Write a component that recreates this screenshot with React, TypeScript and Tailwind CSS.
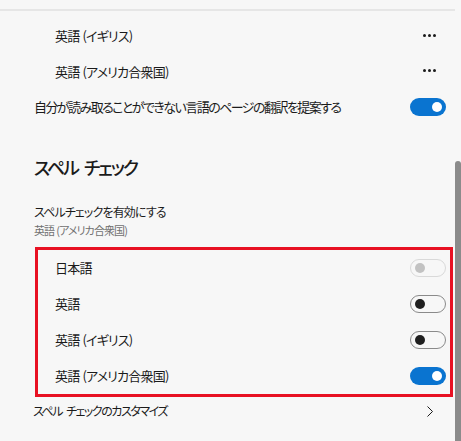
import React from "react";

type ToggleState = "on" | "off" | "disabled";

// tracking eats the plain spaces, so words are split with a fixed gap
function Spaced({ text, gap = "mr-[4px]" }: { text: string; gap?: string }) {
  const parts = text.split(" ");
  return (
    <span>
      {parts.map((p, i) => (
        <span key={i} className={i < parts.length - 1 ? gap : ""}>
          {p}
        </span>
      ))}
    </span>
  );
}

function Toggle({ state }: { state: ToggleState }) {
  if (state === "on") {
    return (
      <div className="flex h-[18px] w-[36px] items-center justify-end rounded-full bg-[#0a74d0] pr-[4px]">
        <div className="h-[10px] w-[10px] rounded-full bg-white" />
      </div>
    );
  }
  const disabled = state === "disabled";
  return (
    <div
      className={
        disabled
          ? "flex h-[18px] w-[36px] items-center rounded-full border border-[#d9d9d9] pl-[4px]"
          : "flex h-[18px] w-[36px] items-center rounded-full border border-[#8a8a8a] pl-[4px]"
      }
    >
      <div
        className={
          disabled
            ? "h-[10px] w-[10px] rounded-full bg-[#c2c2c2]"
            : "h-[10px] w-[10px] rounded-full bg-[#1f1f1f]"
        }
      />
    </div>
  );
}

function Dots() {
  return (
    <div className="mr-[10px] flex items-center gap-[2px] pb-[2px]">
      <span className="h-[3px] w-[3px] rounded-full bg-[#1b1b1b]" />
      <span className="h-[3px] w-[3px] rounded-full bg-[#1b1b1b]" />
      <span className="h-[3px] w-[3px] rounded-full bg-[#1b1b1b]" />
    </div>
  );
}

export default function App() {
  const languages = ["英語 (イギリス)", "英語 (アメリカ合衆国)"];

  const spellRows: { label: string; state: ToggleState }[] = [
    { label: "日本語", state: "disabled" },
    { label: "英語", state: "off" },
    { label: "英語 (イギリス)", state: "off" },
    { label: "英語 (アメリカ合衆国)", state: "on" },
  ];

  return (
    <div className="flex h-[441px] w-[461px] overflow-hidden bg-[#f7f7f7] font-['Noto_Sans_CJK_JP',sans-serif] text-[#1b1b1b] [font-feature-settings:'palt'_1]">
      <div className="flex flex-1 flex-col">
        <div className="h-[9px]" />
        <div className="h-[2px] bg-[#e6e6e6]" />

        <div className="flex flex-col pl-[34px] pt-[7px]">
          {/* preferred languages */}
          {languages.map((lang, i) => (
            <div
              key={i}
              className={
                i === 0
                  ? "flex h-[36px] items-center justify-between pl-[21px] pr-[9px] text-[13px] tracking-[-0.8px]"
                  : "flex h-[35px] items-center justify-between pl-[21px] pr-[9px] text-[13px] tracking-[-0.8px]"
              }
            >
              <Spaced text={lang} gap="mr-[3px]" />
              <Dots />
            </div>
          ))}
          <div className="flex h-[36px] items-center justify-between pr-[9px] text-[13px]">
            <span className="tracking-[-1.55px]">自分が読み取ることができない言語のページの翻訳を提案する</span>
            <Toggle state="on" />
          </div>

          {/* spell check */}
          <h2 className="mt-[28px] flex h-[28px] items-center text-[18px] font-medium tracking-[-2.1px]">
            <Spaced text="スペル チェック" gap="mr-[6px]" />
          </h2>
          <div className="mt-[21px] flex h-[20px] items-center text-[12px] tracking-[-0.85px]">
            スペルチェックを有効にする
          </div>
          <div className="flex h-[16px] items-center text-[11px] tracking-[-0.9px] text-[#707070]">
            <Spaced text="英語 (アメリカ合衆国)" gap="mr-[2px]" />
          </div>

          <div className="mr-[2px] ml-[1px] mt-[9px] border-[3px] border-[#e81123]">
            {spellRows.map((row, i) => (
              <div
                key={i}
                className="flex h-[36px] items-center justify-between pl-[17px] pr-[4px] text-[13px] tracking-[-0.8px]"
              >
                <Spaced text={row.label} gap="mr-[3px]" />
                <Toggle state={row.state} />
              </div>
            ))}
          </div>

          <div className="flex h-[28px] items-center justify-between pr-[22px] text-[12px]">
            <span className="-ml-[1px] tracking-[-1.45px]">
              <Spaced text="スペル チェックのカスタマイズ" gap="mr-[4px]" />
            </span>
            <svg width="6" height="11" viewBox="0 0 6 11" fill="none">
              <path d="M0.5 0.5 L5.5 5.5 L0.5 10.5" stroke="#1b1b1b" strokeWidth="1" />
            </svg>
          </div>
        </div>
      </div>

      {/* scrollbar */}
      <div className="flex w-[6px] flex-col pt-[161px]">
        <div className="flex-1 rounded-t-full bg-[#8b8b8b]" />
      </div>
    </div>
  );
}
